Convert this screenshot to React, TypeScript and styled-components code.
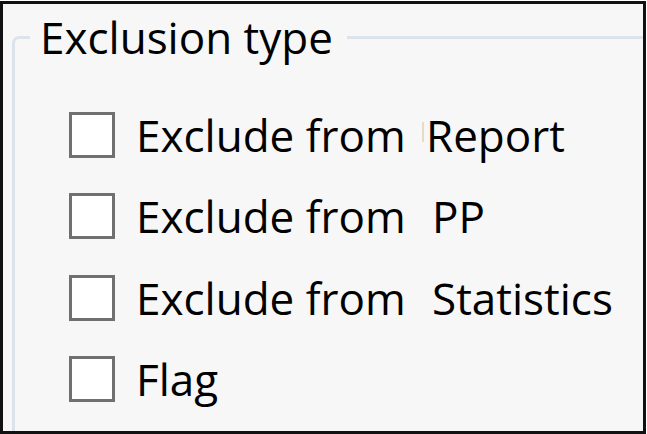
import React from "react";
import styled, { createGlobalStyle } from "styled-components";

const Global = createGlobalStyle`
  html, body {
    margin: 0;
    padding: 0;
    background: #ffffff;
  }
  body {
    font-family: "Open Sans", "Noto Sans", sans-serif;
    color: #000;
  }
`;

const Frame = styled.div`
  box-sizing: border-box;
  width: 646px;
  height: 433px;
  margin-top: 1px;
  padding-top: 9px;
  border: 3px solid #111;
  background: #f7f7f7;
  overflow: hidden;
`;

const Group = styled.fieldset`
  box-sizing: border-box;
  width: 700px;
  height: 500px;
  margin: 0 0 0 9px;
  padding: 0 0 0 54px;
  border: 3px solid #dde3ea;
  border-radius: 7px;
  min-inline-size: auto;
`;

const Legend = styled.legend`
  margin-left: -39px;
  padding: 0 14px 0 10px;
  font-size: 44px;
  line-height: 48px;
  margin-top: 6px;
`;

const List = styled.div`
  display: flex;
  flex-direction: column;
  padding-top: 33px;
`;

const Row = styled.label`
  display: flex;
  align-items: center;
  height: 81.5px;
`;

const Box = styled.span`
  box-sizing: border-box;
  flex: none;
  width: 46px;
  height: 46px;
  border: 3px solid #707070;
  background: #fff;
  margin-right: 21px;
`;

const Text = styled.span`
  font-size: 44px;
  line-height: 48px;
  white-space: nowrap;
`;

const Lead = styled(Text)`
  display: inline-block;
  width: 290px;
`;

const Tail = styled(Text)<{ $shift: number }>`
  padding-left: ${({ $shift }) => $shift}px;
  position: relative;
`;

const Mark = styled.span`
  position: absolute;
  left: -4px;
  top: 11px;
  width: 2px;
  height: 20px;
  background: #e6dcc4;
`;

const rows = [
  { lead: "Exclude from", tail: "Report", shift: 0, mark: true },
  { lead: "Exclude from", tail: "PP", shift: 6, mark: false },
  { lead: "Exclude from", tail: "Statistics", shift: 6, mark: false },
];

export default function App() {
  return (
    <>
      <Global />
      <Frame>
        <Group>
          <Legend>Exclusion type</Legend>
          <List>
            {rows.map((r) => (
              <Row key={r.tail}>
                <Box />
                <Lead>{r.lead}</Lead>
                <Tail $shift={r.shift}>
                  {r.mark && <Mark />}
                  {r.tail}
                </Tail>
              </Row>
            ))}
            <Row>
              <Box />
              <Text>Flag</Text>
            </Row>
          </List>
        </Group>
      </Frame>
    </>
  );
}
